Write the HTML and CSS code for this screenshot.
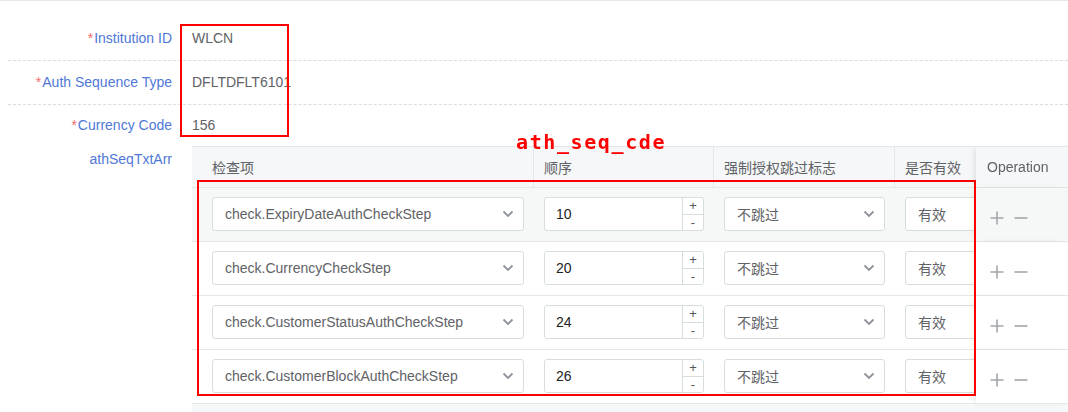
FILE: index.html
```html
<!DOCTYPE html>
<html lang="en">
<head>
<meta charset="utf-8">
<title>Auth Sequence</title>
<link rel="stylesheet" href="styles.css">
</head>
<body>
<div class="page">
  <div class="form">
    <div class="field">
      <label class="label"><span class="req">*</span>Institution ID</label>
      <div class="value">WLCN</div>
    </div>
    <div class="field">
      <label class="label"><span class="req">*</span>Auth Sequence Type</label>
      <div class="value">DFLTDFLT6101</div>
    </div>
    <div class="field field-last">
      <label class="label"><span class="req">*</span>Currency Code</label>
      <div class="value">156</div>
    </div>
    <div class="field field-table">
      <label class="label label-top">athSeqTxtArr</label>
      <div class="table-wrap">
        <table class="grid">
          <colgroup>
            <col class="c1"><col class="c2"><col class="c3"><col class="c4"><col class="c5">
          </colgroup>
          <thead>
            <tr>
              <th class="sep"><div class="th th-first">检查项</div></th>
              <th class="sep"><div class="th">顺序</div></th>
              <th class="sep"><div class="th">强制授权跳过标志</div></th>
              <th><div class="th">是否有效</div></th>
              <th class="op"><div class="th th-op">Operation</div></th>
            </tr>
          </thead>
          <tbody>
            <tr class="is-hover">
              <td><div class="cell cell-first"><div class="select"><span class="sel-text">check.ExpiryDateAuthCheckStep</span><svg class="chev" width="12" height="8" viewBox="0 0 12 8"><path d="M1.5 1.5 L6 6 L10.5 1.5" /></svg></div></div></td>
              <td><div class="cell"><div class="num"><span class="num-val">10</span><span class="num-btns"><span class="nb">+</span><span class="nb nb-down">-</span></span></div></div></td>
              <td><div class="cell"><div class="select"><span class="sel-text">不跳过</span><svg class="chev" width="12" height="8" viewBox="0 0 12 8"><path d="M1.5 1.5 L6 6 L10.5 1.5" /></svg></div></div></td>
              <td><div class="cell"><div class="select"><span class="sel-text">有效</span></div></div></td>
              <td class="op"><div class="cell cell-op"><svg class="opi" width="14" height="14" viewBox="0 0 14 14"><path d="M0.5 7 H13.5 M7 0.5 V13.5" /></svg><svg class="opi" width="14" height="14" viewBox="0 0 14 14"><path d="M0.5 7 H13.5" /></svg></div></td>
            </tr>
            <tr>
              <td><div class="cell cell-first"><div class="select"><span class="sel-text">check.CurrencyCheckStep</span><svg class="chev" width="12" height="8" viewBox="0 0 12 8"><path d="M1.5 1.5 L6 6 L10.5 1.5" /></svg></div></div></td>
              <td><div class="cell"><div class="num"><span class="num-val">20</span><span class="num-btns"><span class="nb">+</span><span class="nb nb-down">-</span></span></div></div></td>
              <td><div class="cell"><div class="select"><span class="sel-text">不跳过</span><svg class="chev" width="12" height="8" viewBox="0 0 12 8"><path d="M1.5 1.5 L6 6 L10.5 1.5" /></svg></div></div></td>
              <td><div class="cell"><div class="select"><span class="sel-text">有效</span></div></div></td>
              <td class="op"><div class="cell cell-op"><svg class="opi" width="14" height="14" viewBox="0 0 14 14"><path d="M0.5 7 H13.5 M7 0.5 V13.5" /></svg><svg class="opi" width="14" height="14" viewBox="0 0 14 14"><path d="M0.5 7 H13.5" /></svg></div></td>
            </tr>
            <tr>
              <td><div class="cell cell-first"><div class="select"><span class="sel-text">check.CustomerStatusAuthCheckStep</span><svg class="chev" width="12" height="8" viewBox="0 0 12 8"><path d="M1.5 1.5 L6 6 L10.5 1.5" /></svg></div></div></td>
              <td><div class="cell"><div class="num"><span class="num-val">24</span><span class="num-btns"><span class="nb">+</span><span class="nb nb-down">-</span></span></div></div></td>
              <td><div class="cell"><div class="select"><span class="sel-text">不跳过</span><svg class="chev" width="12" height="8" viewBox="0 0 12 8"><path d="M1.5 1.5 L6 6 L10.5 1.5" /></svg></div></div></td>
              <td><div class="cell"><div class="select"><span class="sel-text">有效</span></div></div></td>
              <td class="op"><div class="cell cell-op"><svg class="opi" width="14" height="14" viewBox="0 0 14 14"><path d="M0.5 7 H13.5 M7 0.5 V13.5" /></svg><svg class="opi" width="14" height="14" viewBox="0 0 14 14"><path d="M0.5 7 H13.5" /></svg></div></td>
            </tr>
            <tr>
              <td><div class="cell cell-first"><div class="select"><span class="sel-text">check.CustomerBlockAuthCheckStep</span><svg class="chev" width="12" height="8" viewBox="0 0 12 8"><path d="M1.5 1.5 L6 6 L10.5 1.5" /></svg></div></div></td>
              <td><div class="cell"><div class="num"><span class="num-val">26</span><span class="num-btns"><span class="nb">+</span><span class="nb nb-down">-</span></span></div></div></td>
              <td><div class="cell"><div class="select"><span class="sel-text">不跳过</span><svg class="chev" width="12" height="8" viewBox="0 0 12 8"><path d="M1.5 1.5 L6 6 L10.5 1.5" /></svg></div></div></td>
              <td><div class="cell"><div class="select"><span class="sel-text">有效</span></div></div></td>
              <td class="op"><div class="cell cell-op"><svg class="opi" width="14" height="14" viewBox="0 0 14 14"><path d="M0.5 7 H13.5 M7 0.5 V13.5" /></svg><svg class="opi" width="14" height="14" viewBox="0 0 14 14"><path d="M0.5 7 H13.5" /></svg></div></td>
            </tr>
          </tbody>
        </table>
      </div>
    </div>
  </div>
  <div class="mark mark-a"></div>
  <div class="mark mark-b"></div>
  <div class="mark-text">ath_seq_cde</div>
</div>
</body>
</html>
```

FILE: styles.css
```css
html, body {
  margin: 0;
  padding: 0;
  background: #fff;
}

body {
  font-family: "Liberation Sans", Arial, "Noto Sans CJK SC", sans-serif;
  font-size: 14px;
  color: #606266;
}

.page {
  position: relative;
  height: 411px;
  overflow: hidden;
  border-top: 1px solid #e8e8e8;
}

.form {
  padding: 16px 0 0 8px;
}

.field {
  display: flex;
  align-items: center;
  height: 44px;
  box-sizing: border-box;
  border-bottom: 1px dashed #dcdcdc;
  padding-bottom: 2px;
}

.field-last {
  height: 41px;
  border-bottom: none;
  padding-bottom: 1px;
}

.field-table {
  height: auto;
  border-bottom: none;
  padding-bottom: 0;
  align-items: flex-start;
}

.label {
  flex: none;
  width: 164px;
  text-align: right;
  color: #4f78d8;
  font-size: 14px;
}

.label-top {
  line-height: 27px;
}

.req {
  color: #f56c6c;
  margin-right: 1px;
}

.value {
  margin-left: 20px;
  color: #606266;
}

.table-wrap {
  margin-left: 20px;
  flex: 1;
  min-width: 0;
  overflow: hidden;
  background: #f5f7f8;
  border-top: 1px solid #e3e7e8;
  padding-bottom: 9px;
}

.grid {
  width: 975px;
  table-layout: fixed;
  border-collapse: separate;
  border-spacing: 0;
}

.c1 { width: 342px; }
.c2 { width: 180px; }
.c3 { width: 181px; }
.c4 { width: 180px; }
.c5 { width: 92px; }

.grid th {
  padding: 0;
  background: #f5f7f8;
  border-bottom: 1px solid #e3e7e8;
  font-weight: normal;
  text-align: left;
  color: #606266;
}

.grid th.sep {
  border-right: 1px solid #e3e7e8;
}

.th {
  height: 40px;
  display: flex;
  align-items: center;
  padding: 0 10px 1px;
  box-sizing: border-box;
  white-space: nowrap;
  overflow: hidden;
}

.th-first {
  padding-left: 20px;
}

.th-op {
  padding-left: 11px;
}

.grid td {
  padding: 0;
  background: #fff;
  border-bottom: 1px solid #e3e7e8;
}

.grid tr.is-hover td {
  background: #f6f8f8;
}

.cell {
  height: 53px;
  box-sizing: border-box;
  padding: 9px 10px 10px;
  display: flex;
  align-items: flex-start;
}

.cell-first {
  padding-left: 20px;
}

.op {
  position: sticky;
  right: 0;
  z-index: 2;
  box-shadow: -3px 0 6px -2px rgba(0, 0, 0, 0.12);
}

.cell-op {
  padding: 7px 0 0 14px;
  align-items: center;
  gap: 10px;
}

.opi path {
  fill: none;
  stroke: #a3a6aa;
  stroke-width: 1.6;
}

.select {
  flex: 1;
  min-width: 0;
  height: 34px;
  box-sizing: border-box;
  border: 1px solid #d5dddd;
  border-radius: 3px;
  background: #fff;
  display: flex;
  align-items: center;
  padding: 0 9px 0 12px;
  white-space: nowrap;
  overflow: hidden;
}

.sel-text {
  flex: 1;
  min-width: 0;
  color: #606266;
  overflow: hidden;
}

.chev {
  flex: none;
}

.chev path {
  fill: none;
  stroke: #8f9399;
  stroke-width: 1.8;
}

.num {
  flex: 1;
  height: 34px;
  box-sizing: border-box;
  border: 1px solid #d5dddd;
  border-radius: 3px;
  background: #fff;
  display: flex;
}

.num-val {
  flex: 1;
  padding-left: 11px;
  line-height: 32px;
  color: #222;
}

.num-btns {
  width: 20px;
  border-left: 1px solid #d5dddd;
  display: flex;
  flex-direction: column;
}

.nb {
  flex: 1;
  display: flex;
  align-items: center;
  justify-content: center;
  font-size: 13px;
  line-height: 1;
  color: #555;
}

.nb-down {
  border-top: 1px solid #d5dddd;
}

.mark {
  position: absolute;
  border: 2px solid #ff0000;
  box-sizing: border-box;
  pointer-events: none;
  z-index: 5;
}

.mark-a {
  left: 180px;
  top: 23px;
  width: 109px;
  height: 113px;
}

.mark-b {
  left: 197px;
  top: 179px;
  width: 779px;
  height: 216px;
}

.mark-text {
  position: absolute;
  left: 516px;
  top: 129px;
  z-index: 5;
  font-family: "DejaVu Sans Mono", "Liberation Mono", monospace;
  font-weight: bold;
  font-size: 20px;
  line-height: 24px;
  letter-spacing: 1.6px;
  color: #ff0000;
}
```
